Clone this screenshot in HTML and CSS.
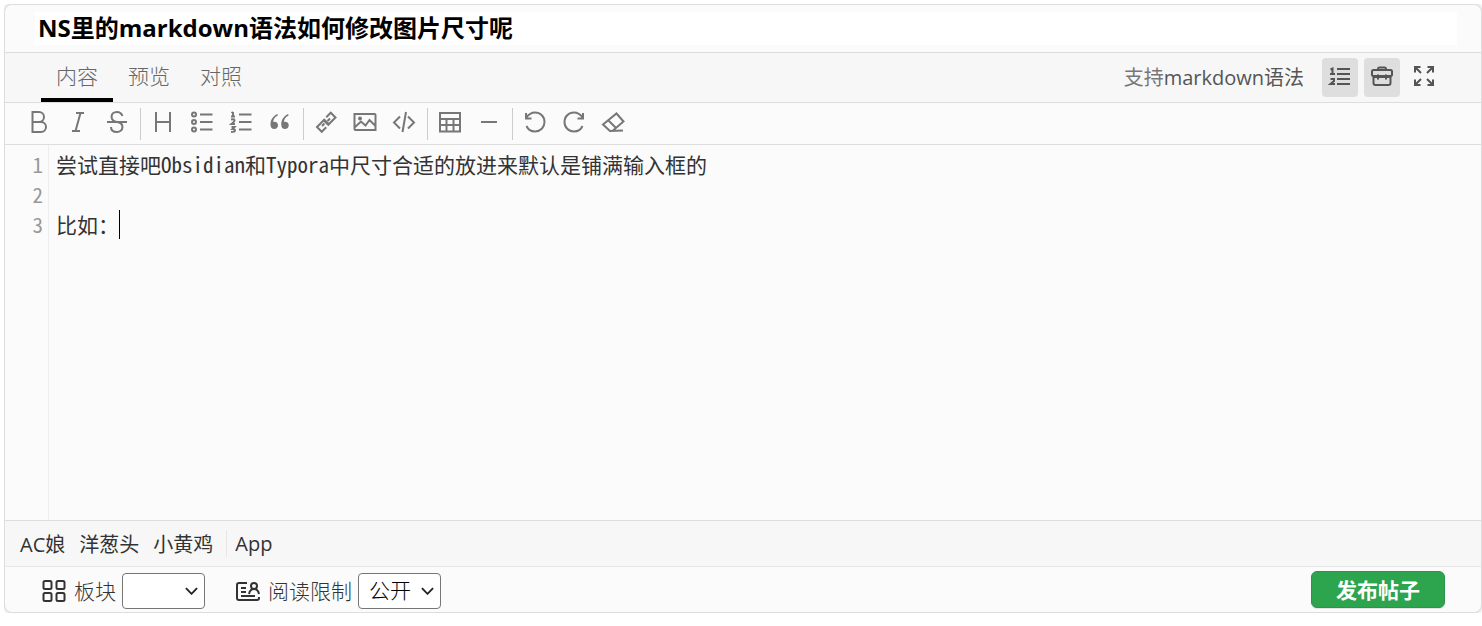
FILE: index.html
```
<!DOCTYPE html>
<html lang="zh-CN">
  <head>
    <meta charset="utf-8">
    <title>发布帖子</title>
    <link rel="stylesheet" href="styles.css">
  </head>
  <body>
    <form class="editor-card">
      <div class="title-row">
        <input class="title-input" type="text" aria-label="标题" value="NS里的markdown语法如何修改图片尺寸呢">
      </div>

      <div class="tab-row">
        <div class="tabs">
          <button type="button" class="tab active">内容</button>
          <button type="button" class="tab">预览</button>
          <button type="button" class="tab">对照</button>
        </div>
        <div class="tab-tools">
          <span class="hint">支持<a href="#">markdown语法</a></span>
          <button type="button" class="tool on" aria-label="行号">
            <svg viewBox="0 0 24 24"><path d="M9 5h13M9 10h13M9 15h13M9 20h13"/><path d="M2.500 5.500l2-1v6M2 10h5M2.500 15h3.500v2l-3.500 3h4.500"/></svg>
          </button>
          <button type="button" class="tool on" aria-label="工具栏">
            <svg viewBox="0 0 24 24"><rect x="2" y="6" width="20" height="6" rx="1.500"/><path d="M3.500 12v7q0 2 2 2h13q2 0 2-2v-7M8 6V5q0-1.500 1.500-1.500h5Q16 3.500 16 5v1M3.500 13h17M8 10.500v5M16 10.500v5"/></svg>
          </button>
          <button type="button" class="tool" aria-label="全屏">
            <svg viewBox="0 0 24 24"><path d="M3 8.500V3h5.500M3.500 3.500L9 9M15.500 3H21v5.500M20.500 3.500L15 9M3 15.500V21h5.500M3.500 20.500L9 15M21 15.500V21h-5.500M20.500 20.500L15 15"/></svg>
          </button>
        </div>
      </div>

      <div class="toolbar">
        <button type="button" aria-label="粗体"><svg viewBox="0 0 48 48"><path d="M24 24c5.500 0 10-4.500 10-10S29.500 4 24 4H11v20zM28 44c5.500 0 10-4.500 10-10s-4.500-10-10-10H11v20z"/></svg></button>
        <button type="button" aria-label="斜体"><svg viewBox="0 0 48 48"><path d="M20 6h16M12 42h16M29 6l-10 36"/></svg></button>
        <button type="button" aria-label="删除线"><svg viewBox="0 0 48 48"><path d="M4 24h40M24 24c16 2 13 20 0 20-7 0-12-3-12-10M35 12c-2-5-6-8-11-8-14 0-15 17 0 20"/></svg></button>
        <span class="divider"></span>
        <button type="button" aria-label="标题"><svg viewBox="0 0 48 48"><path d="M10 4v40M38 4v40M10 24h28"/></svg></button>
        <button type="button" aria-label="无序列表"><svg viewBox="0 0 48 48"><circle cx="8" cy="9" r="4"/><circle cx="8" cy="24" r="4"/><circle cx="8" cy="39" r="4"/><path d="M20 9h25M20 24h25M20 39h25"/></svg></button>
        <button type="button" aria-label="有序列表"><svg viewBox="0 0 48 48"><path d="M8 4v9M5 6l3-2M4 13h8M4 19q7-2 7 2 0 2-6 7h7M5 34h6l-4 4q5 0 5 3 0 3-8 3M20 9h25M20 24h25M20 39h25"/></svg></button>
        <button type="button" aria-label="引用"><svg viewBox="0 0 48 48"><path class="solid" d="M19 8C10 12 5 19 5 29c0 6 3 9 7.500 9s7.500-3 7.500-7.500-3-7-7-7c-1.500 0-2.500.5-2.500.5 0-6 3-10 9-13zM40.500 8c-9 4-14 11-14 21 0 6 3 9 7.500 9s7.500-3 7.500-7.500-3-7-7-7c-1.500 0-2.500.5-2.500.5 0-6 3-10 9-13z"/></svg></button>
        <span class="divider"></span>
        <button type="button" aria-label="链接"><svg viewBox="0 0 48 48"><path d="M24.500 14.500l9-9 9.500 9.500-14.500 14.500-9.500-9.500M24.500 34.500l-9 9L6 34l14.500-14.500 9.500 9.500M27 22l5-5M16 32l5-5"/></svg></button>
        <button type="button" aria-label="图片"><svg viewBox="0 0 48 48"><path d="M5 8h38q2 0 2 2v30H5q-2 0-2-2V8zM3 35l13-12 9 8 8-11 12 12"/><circle cx="14" cy="17" r="2"/></svg></button>
        <button type="button" aria-label="代码"><svg viewBox="0 0 48 48"><path d="M16 13L4 25l12 12M32 13l12 12-12 12M28 4l-7 40"/></svg></button>
        <span class="divider"></span>
        <button type="button" aria-label="表格"><svg viewBox="0 0 48 48"><path d="M4 6h40v37H4zM4 18h40M4 30h40M17 18v25M31 18v25"/></svg></button>
        <button type="button" aria-label="分割线"><svg viewBox="0 0 48 48"><path d="M8 24h32"/></svg></button>
        <span class="divider"></span>
        <button type="button" aria-label="撤销"><svg viewBox="0 0 48 48"><path d="M6 6v11h11M6 16C11 9 17 5 24 5c11 0 19 8 19 19s-8 19-19 19c-8 0-14-4-17-11"/></svg></button>
        <button type="button" aria-label="重做"><svg viewBox="0 0 48 48"><path d="M42 6v11H31M42 16C37 9 31 5 24 5 13 5 5 13 5 24s8 19 19 19c8 0 14-4 17-11"/></svg></button>
        <button type="button" aria-label="清空"><svg viewBox="0 0 48 48"><path d="M44 41L18 42 4 29 31 7l14 16-21 18M14 20l16 16"/></svg></button>
      </div>

      <div class="code-area">
        <div class="gutter">
          <span>1</span>
          <span>2</span>
          <span>3</span>
        </div>
        <div class="code-body">
          <textarea class="code-text" aria-label="内容" spellcheck="false">尝试直接吧Obsidian和Typora中尺寸合适的放进来默认是铺满输入框的

比如：</textarea>
          <span class="cursor"></span>
        </div>
      </div>

      <div class="sticker-row">
        <button type="button">AC娘</button>
        <button type="button">洋葱头</button>
        <button type="button">小黄鸡</button>
        <button type="button" class="app">App</button>
      </div>

      <div class="submit-row">
        <label class="field" for="category">
          <svg viewBox="0 0 24 24"><rect x="1.500" y="3" width="8" height="8" rx="1.500"/><rect x="14.500" y="3" width="8" height="8" rx="1.500"/><rect x="1.500" y="15" width="8" height="8" rx="1.500"/><rect x="14.500" y="15" width="8" height="8" rx="1.500"/></svg>
          板块
        </label>
        <select id="category"><option></option></select>
        <label class="field limit" for="limit">
          <svg viewBox="0 0 26 24"><path d="M12 5H4q-2 0-2 2v13q0 2 2 2h18q2 0 2-2v-1M6 10h5M6 14h5M6 18h14"/><circle cx="19" cy="8" r="3"/><path d="M14 16q1-5 5-5t5 5"/></svg>
          阅读限制
        </label>
        <select id="limit"><option>公开</option></select>
        <button type="submit" class="submit">发布帖子</button>
      </div>
    </form>
  </body>
</html>
```
FILE: styles.css
```
* {
  box-sizing: border-box;
}

body {
  margin: 4px 0 0 4px;
  background: #fff;
  color: #333;
  font-family: "Open Sans", "Noto Sans CJK SC", sans-serif;
  font-size: 20px;
}

button,
input,
select,
textarea {
  margin: 0;
  font: inherit;
  color: inherit;
}

button {
  padding: 0;
  border: none;
  background: none;
  cursor: pointer;
}

svg {
  display: block;
  width: 24px;
  height: 24px;
  fill: none;
  stroke: currentColor;
  stroke-width: 2;
}

.editor-card {
  border: 1px solid #ddd;
  border-radius: 8px;
  background: #fbfbfb;
  box-shadow: 0 0 4px rgba(0, 0, 0, 0.2);
  overflow: hidden;
}

/* 标题 */
.title-row {
  padding: 7px 24px 7px 30px;
  border-bottom: 1px solid #ddd;
}

.title-input {
  display: block;
  width: 100%;
  height: 33px;
  padding: 0 3px 4px;
  border: none;
  outline: none;
  background: #fff;
  color: #000;
  font-size: 24px;
  font-weight: bold;
}

/* 标签页 */
.tab-row {
  display: flex;
  justify-content: space-between;
  height: 50px;
  padding: 0 39px 0 36px;
  border-bottom: 1px solid #ddd;
  background: #f7f7f7;
}

.tabs {
  display: flex;
}

.tab {
  padding: 0 15px 2px;
  border-bottom: 4px solid transparent;
  color: #666;
  font-size: 21px;
  font-weight: 300;
}

.tab.active {
  border-bottom-color: #000;
}

.tab-tools {
  display: flex;
  align-items: center;
  gap: 6px;
  color: #555;
}

.hint {
  margin-right: 12px;
  padding-bottom: 2px;
  color: #777;
}

.hint a {
  color: #555;
  text-decoration: none;
}

.tool {
  display: flex;
  align-items: center;
  justify-content: center;
  width: 36px;
  height: 39px;
  padding-bottom: 3px;
  border-radius: 4px;
}

.tool.on {
  background: #dedede;
}

/* 工具栏 */
.toolbar {
  display: flex;
  align-items: center;
  height: 42px;
  padding: 0 14px;
  border-bottom: 1px solid #ddd;
  color: #777;
}

.toolbar button {
  width: 39px;
  padding: 0 8px 3px;
}

.toolbar svg {
  stroke-width: 4;
}

.toolbar .solid {
  fill: currentColor;
  stroke: none;
}

.divider {
  width: 1px;
  height: 32px;
  margin: 0 2px 0 4px;
  background: #ccc;
}

/* 编辑区 */
.code-area {
  display: flex;
  min-height: 375px;
  font-family: "Noto Sans Mono CJK SC", "Noto Sans CJK SC", monospace;
  font-size: 21px;
  line-height: 30px;
}

.gutter {
  display: flex;
  flex-direction: column;
  width: 44px;
  padding: 4px 5px 0 0;
  border-right: 1px solid #eee;
  color: #999;
  text-align: right;
}

.code-body {
  position: relative;
  flex: 1;
  display: flex;
}

.code-text {
  flex: 1;
  padding: 4px 7px 0;
  border: none;
  outline: none;
  background: transparent;
  resize: none;
  line-height: 30px;
}

.cursor {
  position: absolute;
  top: 65px;
  left: 70px;
  width: 1px;
  height: 29px;
  background: #000;
}

/* 表情 */
.sticker-row {
  display: flex;
  align-items: center;
  gap: 14px;
  height: 47px;
  padding: 0 15px;
  border-top: 1px solid #ddd;
  border-bottom: 1px solid #e6e6e6;
  background: #f7f7f7;
}

.sticker-row .app {
  margin-left: -1px;
  padding-left: 8px;
  border-left: 1px solid #e6e6e6;
}

/* 发布 */
.submit-row {
  display: flex;
  align-items: center;
  gap: 6px;
  height: 45px;
  padding: 0 36px 0 37px;
  font-size: 21px;
  font-weight: 300;
}

.field {
  display: flex;
  align-items: center;
  gap: 8px;
}

.field.limit {
  gap: 7px;
  margin-left: 24px;
}

.limit svg {
  width: 26px;
}

.submit-row select {
  appearance: none;
  width: 83px;
  height: 36px;
  margin-top: 2px;
  padding: 0 10px 2px;
  border: 1px solid #767676;
  border-radius: 4px;
  background: #fff url("data:image/svg+xml,%3Csvg xmlns='http://www.w3.org/2000/svg' viewBox='0 0 14 8'%3E%3Cpath d='M1 1l6 6 6-6' fill='none' stroke='%23222' stroke-width='2'/%3E%3C/svg%3E") no-repeat right 6px center / 13px 8px;
  color: #000;
}

.submit {
  margin-left: auto;
  width: 134px;
  height: 37px;
  padding-bottom: 2px;
  border: 1px solid #2a964a;
  border-radius: 6px;
  background: #2da44e;
  box-shadow: 0 1px 1px rgba(0, 0, 0, 0.1);
  color: #fff;
  font-weight: bold;
}
```
